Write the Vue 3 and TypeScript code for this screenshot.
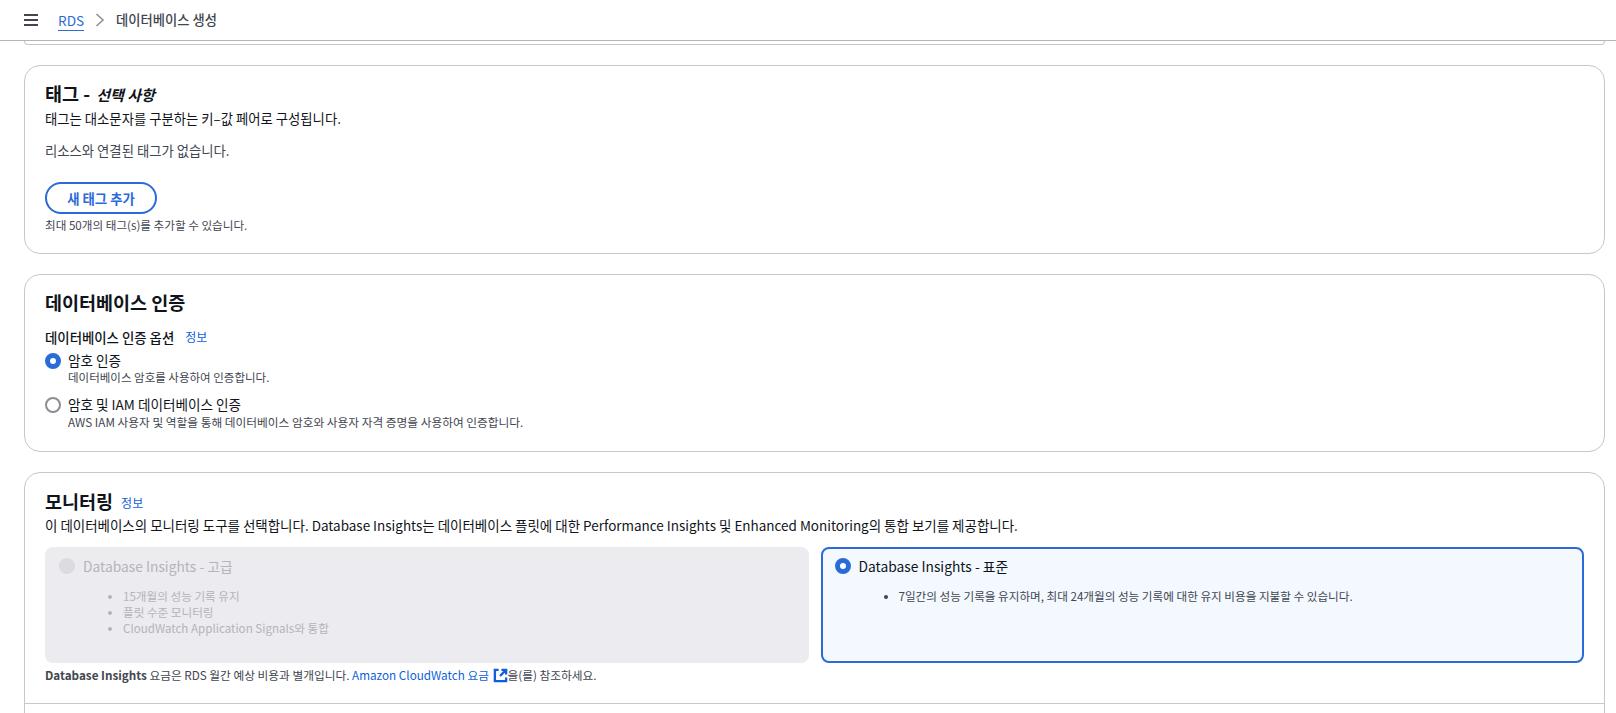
<script setup lang="ts">
const advanced: string[] = ['15개월의 성능 기록 유지', '플릿 수준 모니터링', 'CloudWatch Application Signals와 통합']
const standard: string[] = ['7일간의 성능 기록을 유지하며, 최대 24개월의 성능 기록에 대한 유지 비용을 지불할 수 있습니다.']
</script>

<template>
  <div class="page">
    <header class="topbar">
      <svg class="menu" width="16" height="14" viewBox="0 0 16 14" aria-hidden="true">
        <path d="M1 2h14M1 7h14M1 12h14" fill="none" stroke="#424650" stroke-width="2" />
      </svg>
      <a class="crumb">RDS</a>
      <svg class="chevron" width="10" height="14" viewBox="0 0 10 14" aria-hidden="true">
        <path d="M1.500 1 8 7l-6.500 6" fill="none" stroke="#8c8c94" stroke-width="1.500" />
      </svg>
      <span class="current">데이터베이스 생성</span>
    </header>

    <main class="content">
      <section class="card stub"></section>

      <section class="card tags">
        <h2>태그 - <em>선택 사항</em></h2>
        <p class="desc">태그는 대소문자를 구분하는 키–값 페어로 구성됩니다.</p>
        <p class="empty">리소스와 연결된 태그가 없습니다.</p>
        <button class="add" type="button">새 태그 추가</button>
        <p class="hint">최대 50개의 태그(s)를 추가할 수 있습니다.</p>
      </section>

      <section class="card auth">
        <h2>데이터베이스 인증</h2>
        <div class="label-row">
          <span class="label">데이터베이스 인증 옵션</span>
          <a class="info">정보</a>
        </div>
        <div class="option first">
          <span class="radio on"></span>
          <div>
            <div class="opt-title">암호 인증</div>
            <div class="opt-desc">데이터베이스 암호를 사용하여 인증합니다.</div>
          </div>
        </div>
        <div class="option">
          <span class="radio"></span>
          <div>
            <div class="opt-title">암호 및 IAM 데이터베이스 인증</div>
            <div class="opt-desc">AWS IAM 사용자 및 역할을 통해 데이터베이스 암호와 사용자 자격 증명을 사용하여 인증합니다.</div>
          </div>
        </div>
      </section>

      <section class="card monitoring">
        <div class="mon-head">
          <h2>모니터링</h2>
          <a class="info">정보</a>
        </div>
        <p class="desc">이 데이터베이스의 모니터링 도구를 선택합니다. Database Insights는 데이터베이스 플릿에 대한 Performance Insights 및 Enhanced Monitoring의 통합 보기를 제공합니다.</p>
        <div class="tiles">
          <div class="tile disabled">
            <div class="tile-head">
              <span class="radio off"></span>
              <span>Database Insights - 고급</span>
            </div>
            <ul>
              <li v-for="item in advanced" :key="item">{{ item }}</li>
            </ul>
          </div>
          <div class="tile selected">
            <div class="tile-head">
              <span class="radio on"></span>
              <span>Database Insights - 표준</span>
            </div>
            <ul>
              <li v-for="item in standard" :key="item">{{ item }}</li>
            </ul>
          </div>
        </div>
        <p class="note">
          <strong>Database Insights</strong> 요금은 RDS 월간 예상 비용과 별개입니다.
          <a class="link">Amazon CloudWatch 요금
            <svg class="ext" width="15" height="15" viewBox="0 0 16 16" aria-hidden="true">
              <path d="M6 2H2v12h12v-4" fill="none" stroke="#0f5fdc" stroke-width="2.500" />
              <path d="M9 2h5v5M14 2 7.500 8.500" fill="none" stroke="#0f5fdc" stroke-width="2.500" />
            </svg></a>을(를) 참조하세요.
        </p>
        <div class="divider"></div>
      </section>
    </main>
  </div>
</template>

<style scoped>
.page {
  height: 713px;
  overflow: hidden;
  background: #fff;
  color: #0f141a;
  font-family: "Noto Sans CJK KR", "Noto Sans", sans-serif;
  font-size: 14px;
  line-height: 20px;
}
.topbar {
  height: 40px;
  box-sizing: content-box;
  display: flex;
  align-items: center;
  padding-left: 23px;
  border-bottom: 1px solid #b4b4bb;
  background: #fff;
  position: relative;
  z-index: 1;
}
.menu { margin-right: 19px; }
.crumb {
  color: #2a6bd9;
  font-size: 13.600px;
  line-height: 19px;
  border-bottom: 1px solid #2a6bd9;
  margin-top: 1px;
}
.chevron { margin: 0 11px 0 11px; }
.current {
  color: #424650;
  font-size: 13.300px;
  font-weight: 500;
}
.content {
  padding: 0 11px 0 24px;
  display: flex;
  flex-direction: column;
  gap: 20px;
}
.card {
  border: 1px solid #c6c6cd;
  border-radius: 16px;
  padding: 14px 20px 0;
  background: #fff;
}
.stub {
  height: 3px;
  padding: 0;
  border-top: 0;
  border-radius: 0 0 16px 16px;
  box-sizing: content-box;
}
.tags { height: 172px; padding-top: 15px; }
.auth { height: 161px; padding-top: 15px; }
.monitoring { height: 260px; padding-top: 16px; }
h2 {
  margin: 0;
  font-size: 18.500px;
  line-height: 24px;
  font-weight: 700;
}
h2 em { font-size: 15px; font-weight: 700; margin-left: 2px; }
p { margin: 0; }
.desc { line-height: 20px; margin-top: 2px; color: #0f141a; font-size: 13.350px; }
.monitoring .desc { font-size: 13.470px; }
.empty { margin-top: 12px; color: #424650; font-size: 13.350px; }
.add {
  display: block;
  margin-top: 21px;
  width: 112px;
  height: 32px;
  border: 2px solid #2a6bd9;
  border-radius: 20px;
  background: #fff;
  color: #2a6bd9;
  font: 700 13.400px/20px "Noto Sans CJK KR", "Noto Sans", sans-serif;
  padding: 0;
}
.hint {
  margin-top: 3px;
  font-size: 11.600px;
  line-height: 16px;
  color: #424650;
}
.label-row {
  display: flex;
  align-items: center;
  gap: 11px;
  margin-top: 13px;
}
.label { font-size: 13.400px; font-weight: 500; }
.info { color: #0f5fdc; font-size: 12px; line-height: 16px; }
.option {
  display: flex;
  gap: 7px;
  margin-top: 9px;
}
.option.first { margin-top: 3px; }
.radio {
  flex: none;
  box-sizing: border-box;
  width: 16px;
  height: 16px;
  margin-top: 3px;
  border-radius: 50%;
  border: 2px solid #8c8c94;
  background: #fff;
}
.radio.on { border: 5px solid #2a6bd9; }
.radio.off { border: 0; background: #dbdbe0; }
.opt-title { font-size: 13.600px; line-height: 20px; }
.opt-desc { font-size: 11.700px; line-height: 15px; color: #424650; }
.first .opt-desc { font-size: 11.500px; }
.mon-head {
  display: flex;
  align-items: center;
  gap: 8px;
}
.mon-head .info { margin-top: 3px; }
.tiles {
  display: grid;
  grid-template-columns: 1fr 1fr;
  gap: 12px;
  margin-top: 12px;
}
.tile {
  box-sizing: border-box;
  height: 116px;
  border-radius: 8px;
  padding: 9px 14px;
}
.tile-head {
  display: flex;
  align-items: center;
  gap: 8px;
  font-size: 13.800px;
  line-height: 20px;
}
.tile-head .radio { margin-top: 0; }
.tile ul {
  margin: 12px 0 0;
  padding: 0 0 0 64px;
  font-size: 11.600px;
  line-height: 16px;
}
.disabled {
  background: #ebebf0;
  color: #b4b4bb;
}
.selected {
  background: #f3f9ff;
  border: 2px solid #2a6bd9;
  padding: 7px 12px;
}
.selected ul { color: #424650; }
.note {
  margin-top: 4px;
  font-size: 11.700px;
  line-height: 16px;
  color: #424650;
}
.link { color: #0f5fdc; }
.ext { vertical-align: -3px; margin-left: 1px; }
.divider {
  margin: 20px -20px 0;
  border-top: 1px solid #c6c6cd;
}
</style>

<style>
html, body { margin: 0; overflow: hidden; background: #fff; }
</style>
